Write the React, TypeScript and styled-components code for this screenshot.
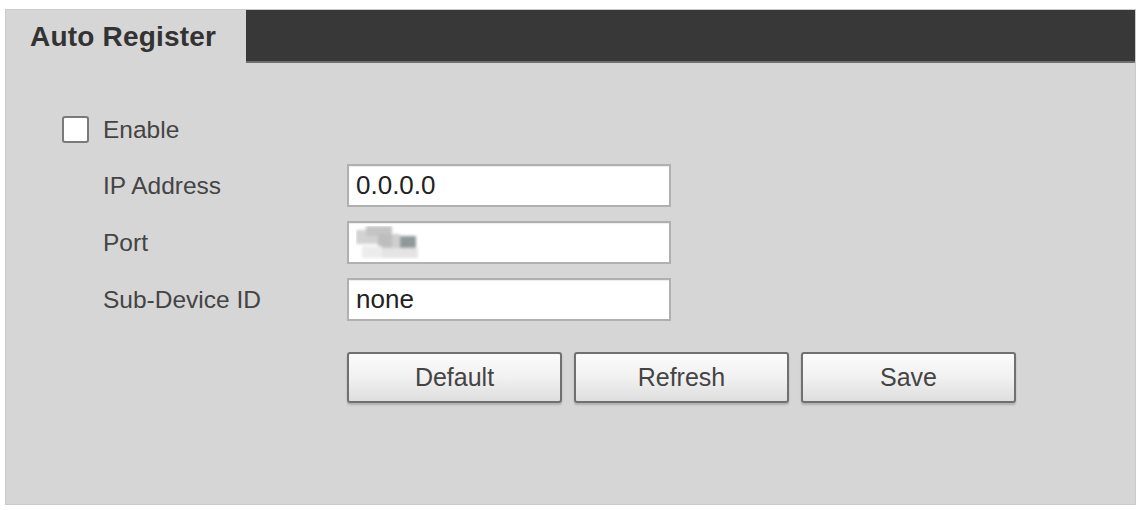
import React, { useState } from 'react';
import styled, { createGlobalStyle } from 'styled-components';

const GlobalStyle = createGlobalStyle`
  html, body {
    margin: 0;
    padding: 0;
    background: #ffffff;
  }
  body {
    font-family: "Liberation Sans", Arial, sans-serif;
  }
`;

const Page = styled.div`
  width: 1137px;
  height: 510px;
  padding: 9px 1px 5px 5px;
  box-sizing: border-box;
`;

const Panel = styled.div`
  height: 100%;
  background: #d6d6d6;
  border: 1px solid #cbcbcb;
  box-sizing: border-box;
  display: flex;
  flex-direction: column;
`;

const Header = styled.div`
  display: flex;
  height: 53px;
  flex-shrink: 0;
`;

const Tab = styled.div`
  width: 240px;
  display: flex;
  align-items: center;
  padding-left: 24px;
  box-sizing: border-box;
  font-size: 28px;
  font-weight: bold;
  color: #333333;
  letter-spacing: 0.2px;
`;

const HeaderBar = styled.div`
  flex: 1;
  background: #383838;
  border-bottom: 2px solid #6e6e6e;
`;

const Body = styled.div`
  padding: 53px 0 0 56px;
  display: flex;
  flex-direction: column;
`;

const EnableRow = styled.label`
  display: flex;
  align-items: center;
  gap: 14px;
  height: 27px;
  font-size: 24.5px;
  color: #444444;
  cursor: pointer;
`;

const CheckBox = styled.span<{ checked: boolean }>`
  width: 23px;
  height: 23px;
  background: #ffffff;
  border: 2px solid #7a7a7a;
  border-radius: 3px;
  display: flex;
  align-items: center;
  justify-content: center;
  color: #333;
  font-size: 18px;
`;

const FieldGrid = styled.div`
  margin: 21px 0 0 41px;
  display: grid;
  grid-template-columns: 244px 324px;
  row-gap: 14px;
  align-items: center;
`;

const Label = styled.div`
  font-size: 24.5px;
  color: #444444;
`;

const Field = styled.div`
  height: 43px;
  box-sizing: border-box;
  background: #ffffff;
  border: 2px solid #b0b0b0;
  box-shadow: inset 0 1px 1px rgba(0, 0, 0, 0.08);
  display: flex;
  align-items: center;
  padding-left: 7px;
  font-size: 26px;
  color: #222222;
`;

const Buttons = styled.div`
  grid-column: 2 / 3;
  display: flex;
  gap: 12px;
  margin-top: 17px;
`;

const Button = styled.button`
  flex-shrink: 0;
  width: 215px;
  height: 51px;
  box-sizing: border-box;
  border: 2px solid #707070;
  border-radius: 3px;
  background: linear-gradient(#fbfbfb, #f1f1f1 50%, #dedede);
  box-shadow: 0 2px 2px rgba(0, 0, 0, 0.18);
  font-family: "Liberation Sans", Arial, sans-serif;
  font-size: 25px;
  color: #444444;
  cursor: pointer;
`;

// pixelated placeholder that hides the port number
const Mosaic = () => (
  <svg width="64" height="34" viewBox="0 0 64 34">
    <defs>
      <filter id="soft">
        <feGaussianBlur stdDeviation="1.4" />
      </filter>
    </defs>
    <g filter="url(#soft)">
      <rect x="0" y="4" width="22" height="14" fill="#d2d2d2" />
      <rect x="10" y="0" width="26" height="10" fill="#c4c4c4" />
      <rect x="22" y="8" width="20" height="14" fill="#bdbdbd" />
      <rect x="44" y="10" width="16" height="12" fill="#8f9a98" />
      <rect x="36" y="8" width="8" height="14" fill="#cfcfcf" />
      <rect x="6" y="20" width="20" height="12" fill="#ececec" />
      <rect x="26" y="22" width="36" height="10" fill="#e4e4e4" />
    </g>
  </svg>
);

export default function App() {
  const [enabled, setEnabled] = useState(false);

  return (
    <>
      <GlobalStyle />
      <Page>
        <Panel>
          <Header>
            <Tab>Auto Register</Tab>
            <HeaderBar />
          </Header>
          <Body>
            <EnableRow onClick={() => setEnabled(!enabled)}>
              <CheckBox checked={enabled}>{enabled ? '✓' : ''}</CheckBox>
              Enable
            </EnableRow>
            <FieldGrid>
              <Label>IP Address</Label>
              <Field>0.0.0.0</Field>
              <Label>Port</Label>
              <Field>
                <Mosaic />
              </Field>
              <Label>Sub-Device ID</Label>
              <Field>none</Field>
              <Buttons>
                <Button>Default</Button>
                <Button>Refresh</Button>
                <Button>Save</Button>
              </Buttons>
            </FieldGrid>
          </Body>
        </Panel>
      </Page>
    </>
  );
}
